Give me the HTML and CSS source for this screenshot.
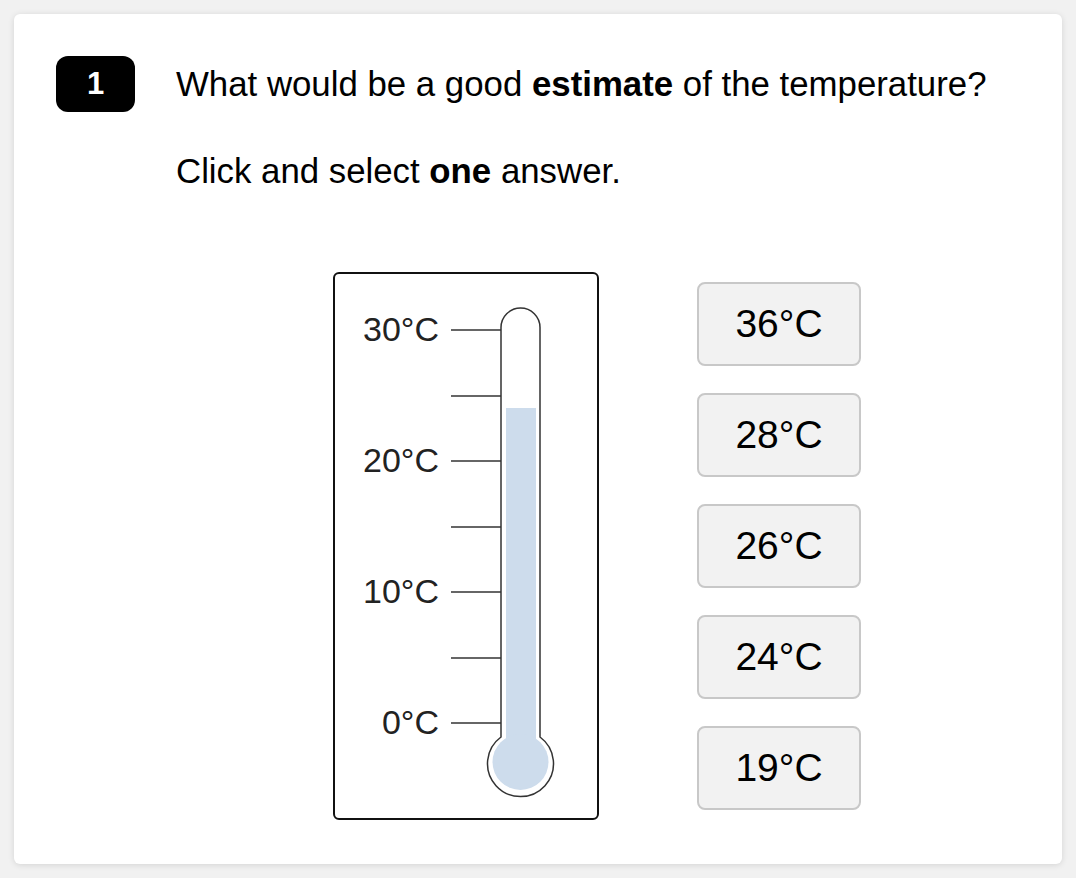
FILE: index.html
```html
<!DOCTYPE html>
<html>
<head>
<meta charset="utf-8">
<link rel="stylesheet" href="styles.css">
</head>
<body>
<div class="card">
  <div class="question">
    <div class="badge">1</div>
    <div class="body">
      <p class="q-text">What would be a good <b>estimate</b> of the temperature?</p>
      <p class="instr">Click and select <b>one</b> answer.</p>
      <div class="task">
        <div class="thermo-box">
          <svg class="thermo" width="262" height="544" viewBox="0 0 262 544">
            <g class="labels">
              <text x="104" y="67">30°C</text>
              <text x="104" y="198">20°C</text>
              <text x="104" y="329">10°C</text>
              <text x="104" y="460">0°C</text>
            </g>
            <g stroke="#333" stroke-width="1.5">
              <line x1="116" y1="56" x2="166" y2="56"/>
              <line x1="116" y1="122" x2="166" y2="122"/>
              <line x1="116" y1="187" x2="166" y2="187"/>
              <line x1="116" y1="253" x2="166" y2="253"/>
              <line x1="116" y1="318" x2="166" y2="318"/>
              <line x1="116" y1="384" x2="166" y2="384"/>
              <line x1="116" y1="449" x2="166" y2="449"/>
            </g>
            <path d="M166 463 L166 53.5 A19.5 19.5 0 0 1 205 53.5 L205 463 A33 33 0 1 1 166 463 Z" fill="#fff" stroke="#333" stroke-width="1.5"/>
            <rect x="171" y="134" width="30" height="340" fill="#cddcec"/>
            <circle cx="185.5" cy="488" r="28" fill="#cddcec"/>
          </svg>
        </div>
        <div class="options">
          <button class="opt">36°C</button>
          <button class="opt">28°C</button>
          <button class="opt">26°C</button>
          <button class="opt">24°C</button>
          <button class="opt">19°C</button>
        </div>
      </div>
    </div>
  </div>
</div>
</body>
</html>
```

FILE: styles.css
```css
html, body {
  margin: 0;
  padding: 0;
  background: #f1f1f1;
}
body {
  padding: 14px;
  font-family: "Liberation Sans", Arial, sans-serif;
  color: #000;
}
.card {
  width: 1048px;
  height: 850px;
  box-sizing: border-box;
  background: #fff;
  border-radius: 6px;
  box-shadow: 0 1px 6px rgba(0, 0, 0, 0.12);
  padding: 42px 0 0 42px;
}
.question {
  display: flex;
  align-items: flex-start;
  gap: 41px;
}
.badge {
  width: 79px;
  height: 56px;
  flex: none;
  background: #000;
  color: #fff;
  border-radius: 12px;
  font-weight: bold;
  font-size: 31px;
  display: flex;
  align-items: center;
  justify-content: center;
}
.body {
  flex: 1;
}
.q-text {
  margin: 0;
  font-size: 34.8px;
  line-height: 56px;
}
.instr {
  margin: 41px 0 0 0;
  font-size: 34.8px;
  line-height: 36px;
}
.task {
  display: flex;
  align-items: flex-start;
  gap: 98px;
  margin: 83px 0 0 157px;
}
.thermo-box {
  width: 266px;
  height: 548px;
  box-sizing: border-box;
  border: 2px solid #111;
  border-radius: 6px;
}
.thermo {
  display: block;
}
.labels text {
  font-family: "Liberation Sans", Arial, sans-serif;
  font-size: 34px;
  fill: #222;
  text-anchor: end;
}
.options {
  display: flex;
  flex-direction: column;
  gap: 27px;
  margin-top: 10px;
}
.opt {
  width: 164px;
  height: 84px;
  box-sizing: border-box;
  background: #f2f2f2;
  border: 2px solid #c8c8c8;
  border-radius: 8px;
  font-family: "Liberation Sans", Arial, sans-serif;
  font-size: 39px;
  color: #000;
  padding: 0;
  cursor: pointer;
}
```
